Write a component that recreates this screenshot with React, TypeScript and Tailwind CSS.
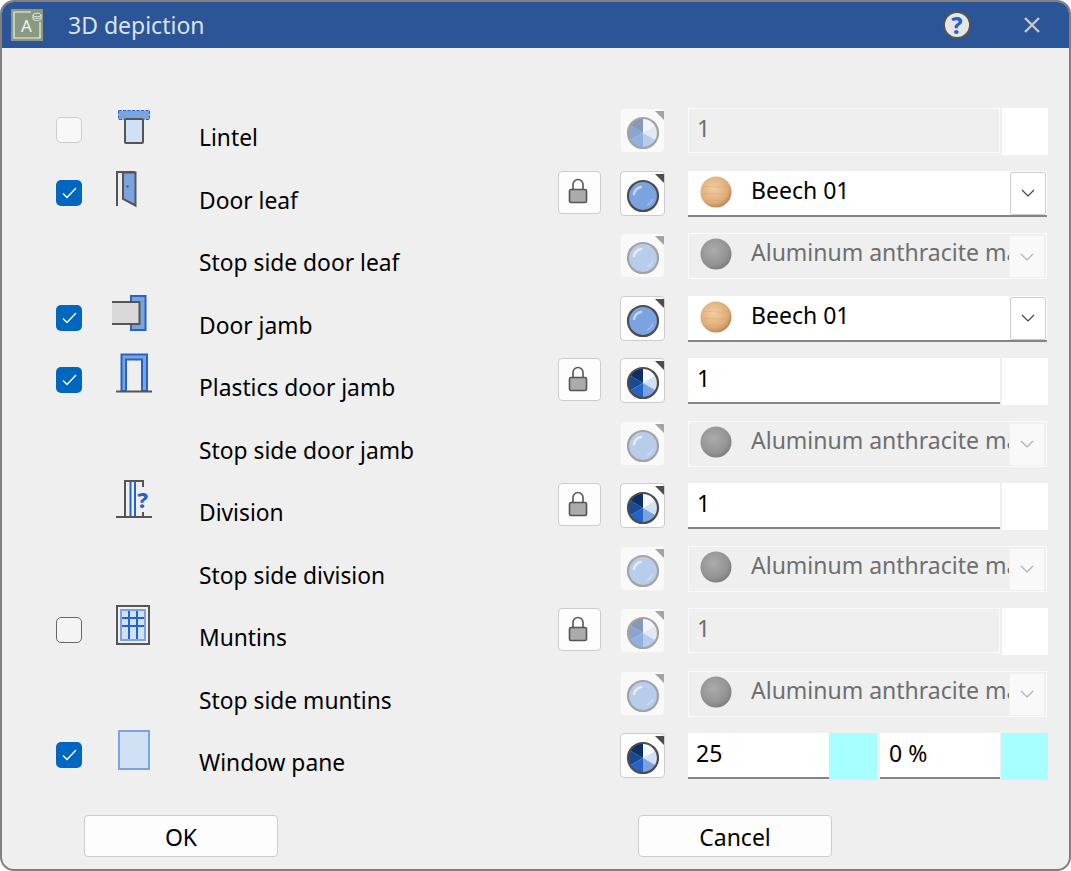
import React from "react";

type Mat = "pie" | "pieDis" | "sphere" | "sphereDis";
type Check = "on" | "off" | "dis" | null;
type Field = "inputDis" | "input" | "beech" | "alu" | "pane";
type Ic = "lintel" | "leaf" | "jamb" | "plastic" | "division" | "muntins" | "pane" | null;
type RowT = { check: Check; icon: Ic; label: string; lock?: boolean; mat: Mat; field: Field };

const rows: RowT[] = [
  { check: "dis", icon: "lintel", label: "Lintel", mat: "pieDis", field: "inputDis" },
  { check: "on", icon: "leaf", label: "Door leaf", lock: true, mat: "sphere", field: "beech" },
  { check: null, icon: null, label: "Stop side door leaf", mat: "sphereDis", field: "alu" },
  { check: "on", icon: "jamb", label: "Door jamb", mat: "sphere", field: "beech" },
  { check: "on", icon: "plastic", label: "Plastics door jamb", lock: true, mat: "pie", field: "input" },
  { check: null, icon: null, label: "Stop side door jamb", mat: "sphereDis", field: "alu" },
  { check: null, icon: "division", label: "Division", lock: true, mat: "pie", field: "input" },
  { check: null, icon: null, label: "Stop side division", mat: "sphereDis", field: "alu" },
  { check: "off", icon: "muntins", label: "Muntins", lock: true, mat: "pieDis", field: "inputDis" },
  { check: null, icon: null, label: "Stop side muntins", mat: "sphereDis", field: "alu" },
  { check: "on", icon: "pane", label: "Window pane", mat: "pie", field: "pane" },
];

function RowIcon({ name }: { name: Ic }) {
  if (!name) return null;
  const dark = "#555555";
  const blue = "#2563c8";
  const light = "#7ba3e0";
  const pale = "#d0e0f5";
  return (
    <svg width="44" height="44" viewBox="0 0 44 44" fill="none" className="block overflow-visible">
      {name === "lintel" && (
        <g>
          <rect x="6.5" y="2.5" width="31" height="9" fill={light} stroke={blue} strokeDasharray="3 1.5" />
          <rect x="13" y="11" width="18" height="24" rx="1" fill={pale} stroke={dark} strokeWidth="2" />
        </g>
      )}
      {name === "leaf" && (
        <g>
          <path d="M5 35V1H23" stroke={dark} strokeWidth="2" />
          <path d="M11 1.5H23.5V34.5L11 28Z" fill={light} stroke={dark} strokeWidth="2" />
          <rect x="14.5" y="14.5" width="2" height="2" fill={dark} />
        </g>
      )}
      {name === "jamb" && (
        <g>
          <rect x="19" y="0" width="14.5" height="34" fill={light} stroke={blue} strokeWidth="2" />
          <path d="M0 6H27.5V28H0" fill="#d9d9d9" stroke={dark} strokeWidth="2" />
        </g>
      )}
      {name === "plastic" && (
        <g>
          <path d="M9.5 33V-3.5H35V33H30V1.5H14V33Z" fill={light} stroke={blue} strokeWidth="2" />
          <path d="M4 33.5H40" stroke={dark} strokeWidth="2" />
        </g>
      )}
      {name === "division" && (
        <g>
          <path d="M13 34V-2H31V4M31 29V34" stroke={dark} strokeWidth="2" />
          <path d="M18.5 -2V34M23 -2V34" stroke={blue} strokeWidth="2" />
          <path d="M4 34H40" stroke={dark} strokeWidth="2" />
          <text x="30.7" y="25" fontSize="22" fontWeight="800" textAnchor="middle" fill={blue} fontFamily="'Noto Sans',sans-serif">?</text>
        </g>
      )}
      {name === "muntins" && (
        <g>
          <rect x="5" y="-2" width="32" height="38" fill="#f0f0f0" stroke={dark} strokeWidth="2" />
          <rect x="9" y="2" width="24" height="30" fill={pale} stroke={light} strokeWidth="2" />
          <path d="M17 3V31M25 3V31M10 10H32M10 18H32" stroke={blue} strokeWidth="2" />
        </g>
      )}
      {name === "pane" && <rect x="7" y="-2" width="30" height="38" fill={pale} stroke={light} strokeWidth="2" />}
    </svg>
  );
}

function pieSlice(i: number) {
  const p = (a: number) => {
    const r = (a * Math.PI) / 180;
    return `${22 + 15 * Math.sin(r)} ${24 - 15 * Math.cos(r)}`;
  };
  return `M22 24L${p(i * 60)}A15 15 0 0 1 ${p((i + 1) * 60)}Z`;
}

function MatIcon({ mat }: { mat: Mat }) {
  const dis = mat === "pieDis" || mat === "sphereDis";
  const ring = dis ? "#a3a3a3" : "#4d4d4d";
  const pieColors = dis
    ? ["#f1f4fa", "#e1e9f6", "#b8cdec", "#8fb0e0", "#8ca5cc", "#8799b8"]
    : ["#f7f9fc", "#d0e0f5", "#7ba3e0", "#2563c8", "#1a4a96", "#102f66"];
  return (
    <svg width="44" height="44" viewBox="0 0 44 44" className="block">
      <path d="M34 2H44V12Z" fill={ring} />
      {mat === "sphere" || mat === "sphereDis" ? (
        <g>
          <circle cx="22" cy="24" r="15" fill={dis ? "#b8cdec" : "#7ba3e0"} stroke={ring} strokeWidth="2.2" />
          <path d="M13 22A9 9 0 0 1 20 15" fill="none" stroke={dis ? "#e4ecf8" : "#c5d8f3"} strokeWidth="2.5" strokeLinecap="round" />
          <path d="M32 27A11 11 0 0 1 26 33" fill="none" stroke={dis ? "#d0def3" : "#a4c0ea"} strokeWidth="1.2" />
        </g>
      ) : (
        <g>
          {pieColors.map((c, i) => (
            <path key={i} d={pieSlice(i)} fill={c} />
          ))}
          <circle cx="22" cy="24" r="15" fill="none" stroke={ring} strokeWidth="2.2" />
        </g>
      )}
    </svg>
  );
}

function Ball({ kind }: { kind: "wood" | "gray" }) {
  return (
    <svg width="32" height="32" viewBox="0 0 32 32" className="block shrink-0">
      <defs>
        <radialGradient id="wood" cx="0.42" cy="0.38" r="0.65">
          <stop offset="0" stopColor="#f0cfa4" />
          <stop offset="0.7" stopColor="#e0ad78" />
          <stop offset="1" stopColor="#b98353" />
        </radialGradient>
        <radialGradient id="gray" cx="0.42" cy="0.38" r="0.65">
          <stop offset="0" stopColor="#ababab" />
          <stop offset="0.7" stopColor="#949494" />
          <stop offset="1" stopColor="#7c7c7c" />
        </radialGradient>
      </defs>
      <circle cx="16" cy="16" r="15.5" fill={`url(#${kind})`} />
      {kind === "wood" && (
        <path d="M3 11C12 9 20 13 29 10M2 18C12 16 20 20 30 17M5 25C13 23 20 26 27 24" fill="none" stroke="#c99763" strokeWidth="0.6" opacity="0.45" />
      )}
    </svg>
  );
}

function Chevron({ color }: { color: string }) {
  return (
    <svg width="14" height="8" viewBox="0 0 14 8" fill="none">
      <path d="M1 1L7 7L13 1" stroke={color} strokeWidth="1.2" />
    </svg>
  );
}

function Combo({ kind }: { kind: "beech" | "alu" }) {
  const on = kind === "beech";
  return (
    <div className={on ? "relative flex h-[46px] w-[359px] items-start overflow-hidden border-b-2 border-[#858585] bg-white pl-[12px] pt-[5px]" : "relative flex h-[46px] w-[359px] items-start overflow-hidden border border-[#fafafa] bg-[#efefef] pl-[11px] pt-[4px]"}>
      <Ball kind={on ? "wood" : "gray"} />
      <div className={on ? "ml-[19px] -mt-[1px] whitespace-nowrap text-[23px] leading-[30px] text-black" : "ml-[19px] -mt-[1px] whitespace-nowrap text-[23px] leading-[30px] text-[#6e6e6e]"}>
        {on ? "Beech 01" : "Aluminum anthracite matt"}
      </div>
      <div className={on ? "absolute right-[1px] top-[1px] flex h-[43px] w-[36px] items-center justify-center rounded-[2px] border border-[#cccccc] bg-white" : "absolute right-[1px] top-[1px] flex h-[43px] w-[36px] items-center justify-center rounded-[2px] border border-[#f0f0f0] bg-[#f9f9f9]"}>
        <Chevron color={on ? "#444444" : "#b0b0b0"} />
      </div>
    </div>
  );
}

function FieldView({ f }: { f: Field }) {
  if (f === "beech" || f === "alu") return <Combo kind={f} />;
  if (f === "inputDis")
    return (
      <div className="flex items-start gap-[2px]">
        <div className="h-[45px] w-[312px] border border-[#fafafa] bg-[#efefef] pl-[8px] text-[23px] leading-[38px] text-[#6e6e6e]">1</div>
        <div className="h-[47px] w-[46px] bg-white" />
      </div>
    );
  if (f === "input")
    return (
      <div className="flex items-start gap-[2px]">
        <div className="h-[46px] w-[312px] border-b-2 border-[#858585] bg-white pl-[9px] text-[23px] leading-[40px] text-black">1</div>
        <div className="h-[47px] w-[46px] bg-white" />
      </div>
    );
  return (
    <div className="flex items-start">
      <div className="h-[46px] w-[141px] border-b-2 border-[#858585] bg-white pl-[8px] text-[23px] leading-[40px] text-black">25</div>
      <div className="h-[47px] w-[48px] shrink-0 bg-[#a8ffff]" />
      <div className="ml-[3px] h-[46px] w-[120px] border-b-2 border-[#858585] bg-white pl-[9px] text-[23px] leading-[40px] text-black">0 %</div>
      <div className="ml-[1px] h-[47px] w-[47px] shrink-0 bg-[#a8ffff]" />
    </div>
  );
}

function CheckBox({ s }: { s: Check }) {
  if (!s) return null;
  if (s === "on")
    return (
      <div className="flex h-[26px] w-[26px] items-center justify-center rounded-[5px] bg-[#0067c0]">
        <svg width="15" height="12" viewBox="0 0 15 12" fill="none">
          <path d="M1 6.5L5 10.5L14 1" stroke="white" strokeWidth="1.4" />
        </svg>
      </div>
    );
  return <div className={s === "dis" ? "h-[26px] w-[26px] rounded-[5px] border-[1.5px] border-[#cccccc] bg-[#f8f8f8]" : "h-[26px] w-[26px] rounded-[5px] border-[1.5px] border-[#666666] bg-[#f4f4f4]"} />;
}

function LockBtn() {
  return (
    <div className="flex h-[43px] w-[43px] items-center justify-center rounded-[4px] border border-[#cccccc] bg-[#fdfdfd] pb-[2px] pr-[3px]">
      <svg width="20" height="26" viewBox="0 0 20 26" fill="none">
        <path d="M5 12V6.5A5 5 0 0 1 15 6.5V12" stroke="#555555" strokeWidth="1.6" />
        <rect x="1.5" y="11.5" width="17" height="13" rx="1.5" fill="#ababab" stroke="#555555" strokeWidth="1.6" />
      </svg>
    </div>
  );
}

function MatBtn({ mat }: { mat: Mat }) {
  const dis = mat === "pieDis" || mat === "sphereDis";
  return (
    <div className={dis ? "h-[45px] w-[45px] overflow-hidden rounded-[4px] border border-[#f0f0f0] bg-[#f9f9f9]" : "h-[45px] w-[45px] overflow-hidden rounded-[4px] border border-[#cccccc] bg-[#fdfdfd]"}>
      <MatIcon mat={mat} />
    </div>
  );
}

export default function App() {
  const font = { fontFamily: "'Noto Sans','Open Sans',sans-serif" };
  return (
    <div className="h-[871px] w-[1071px] bg-white" style={font}>
      <div className="flex h-[871px] w-[1071px] flex-col overflow-hidden rounded-[14px] border-2 border-[#808080] bg-[#efefef]">
        <div className="relative flex h-[46px] shrink-0 items-center bg-[#2b5597]">
          <svg width="32" height="32" viewBox="0 0 32 32" className="ml-[9px] shrink-0">
            <rect width="32" height="32" fill="#8a9a80" />
            <path d="M20 3H3V29H29V13" fill="none" stroke="#f0f0f0" strokeWidth="1.2" />
            <ellipse cx="26" cy="6" rx="4" ry="1.8" fill="none" stroke="#e5e5e5" strokeWidth="0.9" />
            <path d="M22 6V10C22 12 30 12 30 10V6M22 8C22 10 30 10 30 8" fill="none" stroke="#e5e5e5" strokeWidth="0.9" />
            <text x="10" y="23" fontSize="17" fill="#f2f2f2" fontFamily="'Noto Sans',sans-serif">A</text>
          </svg>
          <div className="ml-[25px] text-[23px] leading-[30px] text-[#d9e3ef]">3D depiction</div>
          <div className="ml-auto mr-[52px] flex h-[28px] w-[28px] items-center justify-center rounded-full border-2 border-[#555555] bg-[#e6e6e6] text-[23px] font-extrabold leading-none text-[#2563c8]">?</div>
          <svg width="18" height="18" viewBox="0 0 18 18" className="mr-[28px]">
            <path d="M2 2L16 16M16 2L2 16" stroke="#c8c8c8" strokeWidth="2.4" />
          </svg>
        </div>
        <div className="flex flex-col pl-[54px] pt-[60px]">
          {rows.map((r, i) => (
            <div key={i} className="flex h-[62.5px] w-[992px] items-start">
              <div className="h-full w-[56px] shrink-0 pt-[9px]">
                <CheckBox s={r.check} />
              </div>
              <div className="h-full w-[87px] shrink-0">
                <RowIcon name={r.icon} />
              </div>
              <div className="flex-1 pt-[15px] text-[22.8px] leading-[30px] text-black">{r.label}</div>
              <div className="w-[62px] shrink-0">{r.lock && <LockBtn />}</div>
              <div className="w-[68px] shrink-0">
                <MatBtn mat={r.mat} />
              </div>
              <div className="w-[360px] shrink-0">
                <FieldView f={r.field} />
              </div>
            </div>
          ))}
        </div>
        <div className="mt-[19px] flex pl-[82px]">
          <div className="flex h-[42px] w-[194px] items-center justify-center rounded-[4px] border border-[#cccccc] bg-[#fdfdfd] pt-[3px] text-[23px] text-black">OK</div>
          <div className="ml-[360px] flex h-[42px] w-[194px] items-center justify-center rounded-[4px] border border-[#cccccc] bg-[#fdfdfd] pt-[3px] text-[23px] text-black">Cancel</div>
        </div>
      </div>
    </div>
  );
}
